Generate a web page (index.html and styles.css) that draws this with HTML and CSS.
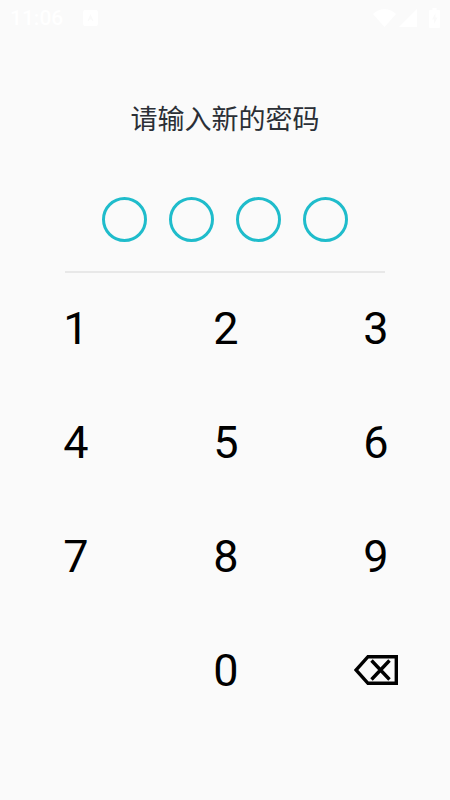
FILE: index.html
```html
<!DOCTYPE html>
<html lang="zh">
<head>
  <meta charset="UTF-8" />
  <meta name="viewport" content="width=device-width, initial-scale=1.0" />
  <title>请输入新的密码</title>
  <link rel="stylesheet" href="styles.css">
</head>
<body>
  <div class="status-bar">
    <div class="status-left">
      <span class="time">11:06</span>
      <svg class="notice-icon" width="15" height="16" viewBox="0 0 15 16">
        <path fill="#fff" fill-rule="evenodd" d="M2 0h11a2 2 0 0 1 2 2v12a2 2 0 0 1-2 2H2a2 2 0 0 1-2-2V2a2 2 0 0 1 2-2zM7.500 4 4.500 11h1.400l.6-1.500h2l.6 1.500h1.400z"/>
      </svg>
    </div>
    <div class="status-right">
      <svg class="wifi-icon" width="23" height="18" viewBox="0 0 23 18"><path fill="#fff" d="M0 5C3 2 7 .2 11.500.2S20 2 23 5L11.500 18z"/></svg>
      <svg class="signal-icon" width="18" height="18" viewBox="0 0 18 18"><path fill="#fff" d="M18 0v18H0z"/></svg>
      <svg width="11" height="20" viewBox="0 0 11 20">
        <path fill="#fff" fill-rule="evenodd" d="M3.500 0h4v2H10a1 1 0 0 1 1 1v16a1 1 0 0 1-1 1H1a1 1 0 0 1-1-1V3a1 1 0 0 1 1-1h2.500zM6.500 5 3 11.500h2V16l3.500-6.500h-2z"/>
      </svg>
    </div>
  </div>

  <h2 class="prompt">请输入新的密码</h2>

  <div class="dots">
    <span class="dot"></span>
    <span class="dot"></span>
    <span class="dot"></span>
    <span class="dot"></span>
  </div>

  <div class="divider"></div>

  <div class="keypad">
    <button class="key">1</button>
    <button class="key">2</button>
    <button class="key">3</button>
    <button class="key">4</button>
    <button class="key">5</button>
    <button class="key">6</button>
    <button class="key">7</button>
    <button class="key">8</button>
    <button class="key">9</button>
    <span></span>
    <button class="key">0</button>
    <button class="key" aria-label="delete">
      <svg width="44" height="30" viewBox="0 0 44 30">
        <path fill="none" stroke="#000" stroke-width="3.400" d="M42.300 1.700H14L2 15l12 13.300h28.300zM17.500 5.500l18 19M35.500 5.500l-18 19"/>
      </svg>
    </button>
  </div>
</body>
</html>
```

FILE: styles.css
```css
* {
  box-sizing: border-box;
}

body {
  margin: 0;
  height: 800px;
  overflow: hidden;
  background: #fafafa;
  font-family: Roboto, "Noto Sans CJK SC", sans-serif;
}

.status-bar {
  display: flex;
  justify-content: space-between;
  align-items: center;
  height: 36px;
  padding: 0 10px;
}

.status-left {
  display: flex;
  align-items: center;
  gap: 20px;
}

.time {
  color: #fff;
  font-size: 21px;
  font-weight: 500;
}

.status-right {
  display: flex;
  align-items: center;
}

.wifi-icon {
  margin-right: 3px;
}

.signal-icon {
  margin-right: 12px;
}

.prompt {
  margin: 61px 0 0;
  text-align: center;
  color: #2b2f36;
  font-family: "Noto Sans CJK SC", sans-serif;
  font-size: 27px;
  font-weight: 400;
  line-height: 42px;
}

.dots {
  display: flex;
  justify-content: center;
  gap: 22px;
  margin-top: 58px;
}

.dot {
  width: 45px;
  height: 45px;
  border: 3.500px solid #1fbccb;
  border-radius: 50%;
}

.divider {
  height: 2px;
  margin: 29px 65px 0;
  background: #e8e8e8;
}

.keypad {
  display: grid;
  grid-template-columns: repeat(3, 150px);
  grid-auto-rows: 114px;
  margin-top: -2px;
}

.key {
  display: flex;
  align-items: center;
  justify-content: center;
  padding: 0 0 0 2px;
  border: none;
  background: none;
  color: #000;
  font-family: inherit;
  font-size: 45px;
}
```
